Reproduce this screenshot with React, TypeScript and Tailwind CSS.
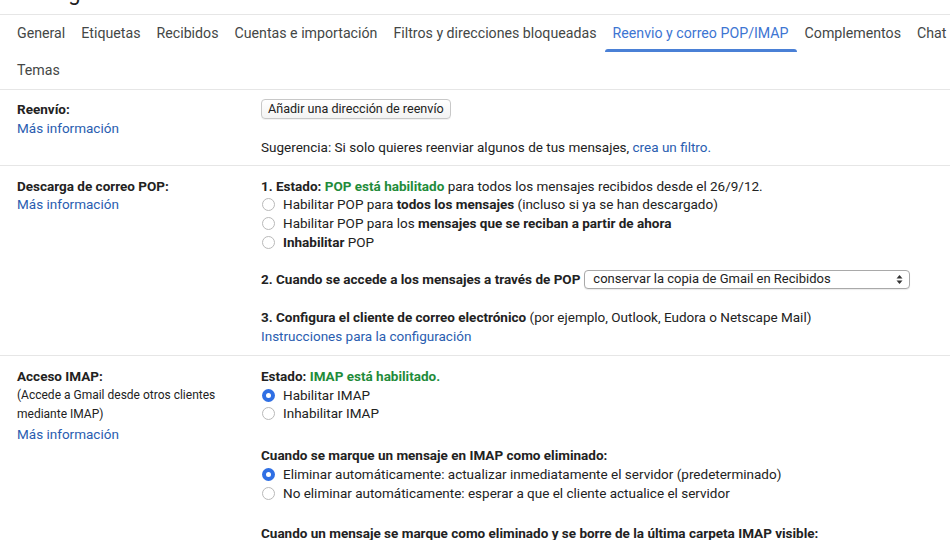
import React from "react";

const Radio = ({ checked = false }: { checked?: boolean }) =>
  checked ? (
    <span className="ml-[1px] mr-[8px] flex h-[13px] w-[13px] shrink-0 items-center justify-center rounded-full bg-[#2f6fe4]">
      <span className="h-[5px] w-[5px] rounded-full bg-white" />
    </span>
  ) : (
    <span className="ml-[1px] mr-[8px] h-[13px] w-[13px] shrink-0 rounded-full border border-[#b9b9b9] bg-white" />
  );

const Line = ({ children, className = "" }: { children?: React.ReactNode; className?: string }) => (
  <div className={"flex h-[18.75px] items-center whitespace-nowrap " + className}>{children}</div>
);

const Link = ({ children }: { children: React.ReactNode }) => (
  <span className="text-[#2a5db0]">{children}</span>
);

const tabs = [
  "General",
  "Etiquetas",
  "Recibidos",
  "Cuentas e importación",
  "Filtros y direcciones bloqueadas",
  "Reenvio y correo POP/IMAP",
  "Complementos",
  "Chat",
];

export default function App() {
  return (
    <div
      className="h-[540px] w-[950px] overflow-hidden bg-white text-[13.5px] text-[#222]"
      style={{ fontFamily: "Roboto, 'Liberation Sans', sans-serif" }}
    >
      {/* cropped heading */}
      <div className="h-[15px] overflow-hidden border-b border-[#e6e6e6] pl-[17px]">
        <div className="mt-[-18px] text-[22px] leading-[22px] text-[#1f1f1f]">Configuración</div>
      </div>

      {/* tabs */}
      <div className="border-b border-[#e6e6e6]">
        <div className="flex h-[37px] overflow-hidden whitespace-nowrap pl-[9px] text-[14.2px] text-[#444746]">
          {tabs.map((t) => {
            const active = t === "Reenvio y correo POP/IMAP";
            return (
              <div
                key={t}
                className={
                  "relative flex h-full shrink-0 items-center px-[8px] " +
                  (active ? "text-[#3d75d2]" : "")
                }
              >
                {t}
                {active && (
                  <span className="absolute bottom-0 left-0 right-0 h-[3px] rounded-t-[3px] bg-[#4a80d6]" />
                )}
              </div>
            );
          })}
        </div>
        <div className="flex h-[37px] items-center pl-[17px] pt-[1px] text-[14.2px] text-[#444746]">Temas</div>
      </div>

      {/* Reenvío */}
      <div className="flex border-b border-[#e6e6e6] pb-[8.6px] pt-[10.4px] leading-[18.75px]">
        <div className="w-[261px] shrink-0 pl-[17px]">
          <Line className="font-bold">Reenvío:</Line>
          <Line>
            <Link>Más información</Link>
          </Line>
        </div>
        <div className="flex-1">
          <Line>
            <span className="mt-[-1px] flex h-[20px] items-center rounded-[4px] border border-[#c8c8c8] bg-gradient-to-b from-white to-[#f3f3f3] px-[6px] text-[12.6px] text-[#222] shadow-[0_1px_0_rgba(0,0,0,0.05)]">
              Añadir una dirección de reenvío
            </span>
          </Line>
          <Line />
          <Line>
            Sugerencia: Si solo quieres reenviar algunos de tus mensajes,&nbsp;<Link>crea un filtro.</Link>
          </Line>
        </div>
      </div>

      {/* POP */}
      <div className="flex border-b border-[#e6e6e6] pb-[9.4px] pt-[10.4px] leading-[18.75px]">
        <div className="w-[261px] shrink-0 pl-[17px]">
          <Line className="font-bold">Descarga de correo POP:</Line>
          <Line>
            <Link>Más información</Link>
          </Line>
        </div>
        <div className="flex-1">
          <Line>
            <span className="font-bold">1. Estado:&nbsp;</span>
            <span className="font-bold text-[#1f8b3a]">POP está habilitado</span>
            &nbsp;para todos los mensajes recibidos desde el 26/9/12.
          </Line>
          <Line>
            <Radio />
            Habilitar POP para&nbsp;<b>todos los mensajes</b>&nbsp;(incluso si ya se han descargado)
          </Line>
          <Line>
            <Radio />
            Habilitar POP para los&nbsp;<b>mensajes que se reciban a partir de ahora</b>
          </Line>
          <Line>
            <Radio />
            <b>Inhabilitar</b>&nbsp;POP
          </Line>
          <Line />
          <Line>
            <b>2. Cuando se accede a los mensajes a través de POP</b>
            <span className="ml-[4px] flex h-[19px] w-[326px] items-center justify-between rounded-[4px] border border-[#a9a9a9] bg-white pl-[8px] pr-[6px] text-[13px] shadow-[0_1px_1px_rgba(0,0,0,0.08)]">
              <span>conservar la copia de Gmail en Recibidos</span>
              <svg width="7" height="11" viewBox="0 0 7 11">
                <path d="M3.5 1 L6.5 4.5 L0.5 4.5 Z" fill="#333" />
                <path d="M3.5 10 L6.5 6.5 L0.5 6.5 Z" fill="#333" />
              </svg>
            </span>
          </Line>
          <Line />
          <Line>
            <b>3. Configura el cliente de correo electrónico</b>&nbsp;(por ejemplo, Outlook, Eudora o Netscape Mail)
          </Line>
          <Line>
            <Link>Instrucciones para la configuración</Link>
          </Line>
        </div>
      </div>

      {/* IMAP */}
      <div className="flex pt-[11.2px] leading-[18.75px]">
        <div className="w-[261px] shrink-0 pl-[17px]">
          <Line className="font-bold">Acceso IMAP:</Line>
          <div className="text-[12px] leading-[19px]">
            <div>(Accede a Gmail desde otros clientes</div>
            <div>mediante IMAP)</div>
          </div>
          <Line className="mt-[1px]">
            <Link>Más información</Link>
          </Line>
        </div>
        <div className="flex-1">
          <Line>
            <span className="font-bold">Estado:&nbsp;</span>
            <span className="font-bold text-[#1f8b3a]">IMAP está habilitado.</span>
          </Line>
          <Line>
            <Radio checked />
            Habilitar IMAP
          </Line>
          <Line>
            <Radio />
            Inhabilitar IMAP
          </Line>
          <div className="h-[23px]" />
          <Line>
            <b>Cuando se marque un mensaje en IMAP como eliminado:</b>
          </Line>
          <Line>
            <Radio checked />
            Eliminar automáticamente: actualizar inmediatamente el servidor (predeterminado)
          </Line>
          <Line>
            <Radio />
            No eliminar automáticamente: esperar a que el cliente actualice el servidor
          </Line>
          <div className="h-[22px]" />
          <Line>
            <b>Cuando un mensaje se marque como eliminado y se borre de la última carpeta IMAP visible:</b>
          </Line>
        </div>
      </div>
    </div>
  );
}
